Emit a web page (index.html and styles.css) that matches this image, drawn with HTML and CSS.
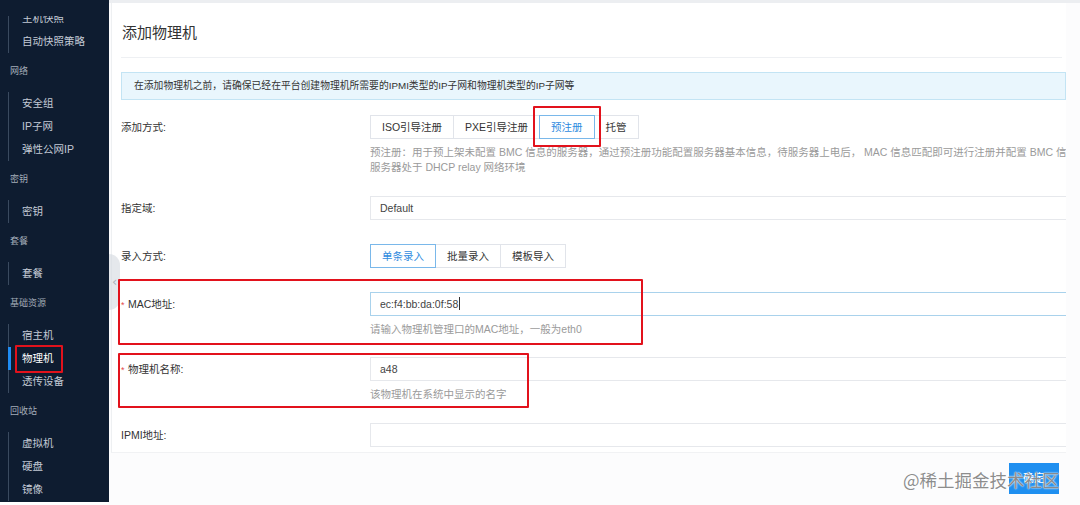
FILE: index.html
```html
<!DOCTYPE html>
<html>
<head>
<meta charset="utf-8">
<title>添加物理机</title>
<link rel="stylesheet" href="styles.css">
</head>
<body>
<div class="app">
  <aside class="sidebar">
    <div class="nav-scroll">
      <div class="nav">
        <ul class="nav-list">
          <li class="nav-item">主机快照</li>
          <li class="nav-item">自动快照策略</li>
        </ul>
        <div class="nav-group">网络</div>
        <ul class="nav-list">
          <li class="nav-item">安全组</li>
          <li class="nav-item">IP子网</li>
          <li class="nav-item">弹性公网IP</li>
        </ul>
        <div class="nav-group">密钥</div>
        <ul class="nav-list">
          <li class="nav-item">密钥</li>
        </ul>
        <div class="nav-group">套餐</div>
        <ul class="nav-list">
          <li class="nav-item">套餐</li>
        </ul>
        <div class="nav-group">基础资源</div>
        <ul class="nav-list">
          <li class="nav-item">宿主机</li>
          <li class="nav-item active">物理机</li>
          <li class="nav-item">透传设备</li>
        </ul>
        <div class="nav-group">回收站</div>
        <ul class="nav-list">
          <li class="nav-item">虚拟机</li>
          <li class="nav-item">硬盘</li>
          <li class="nav-item">镜像</li>
        </ul>
      </div>
    </div>
  </aside>

  <main class="main">
    <section class="card">
      <div class="card-head"><h1 class="title">添加物理机</h1></div>
      <div class="alert">在添加物理机之前，请确保已经在平台创建物理机所需要的IPMI类型的IP子网和物理机类型的IP子网等</div>

      <div class="form">
        <div class="form-item item-mode">
          <div class="label">添加方式:</div>
          <div class="control">
            <div class="btn-group">
              <span class="seg">ISO引导注册</span>
              <span class="seg">PXE引导注册</span>
              <span class="seg on">预注册</span>
              <span class="seg">托管</span>
            </div>
            <div class="desc">预注册：用于预上架未配置 BMC 信息的服务器，通过预注册功能配置服务器基本信息，待服务器上电后， MAC 信息匹配即可进行注册并配置 BMC 信息<br>服务器处于 DHCP relay 网络环境</div>
          </div>
        </div>

        <div class="form-item item-plain">
          <div class="label">指定域:</div>
          <div class="control">
            <div class="input">Default</div>
          </div>
        </div>

        <div class="form-item item-plain">
          <div class="label">录入方式:</div>
          <div class="control">
            <div class="btn-group">
              <span class="seg wide on">单条录入</span>
              <span class="seg wide">批量录入</span>
              <span class="seg wide">模板导入</span>
            </div>
          </div>
        </div>

        <div class="form-item item-mac">
          <div class="label"><span class="req">*</span>MAC地址:</div>
          <div class="control">
            <div class="input focus">ec:f4:bb:da:0f:58<span class="caret"></span></div>
            <div class="hint">请输入物理机管理口的MAC地址，一般为eth0</div>
          </div>
        </div>

        <div class="form-item item-name">
          <div class="label"><span class="req">*</span>物理机名称:</div>
          <div class="control">
            <div class="input">a48</div>
            <div class="hint">该物理机在系统中显示的名字</div>
          </div>
        </div>

        <div class="form-item item-last">
          <div class="label">IPMI地址:</div>
          <div class="control">
            <div class="input"></div>
          </div>
        </div>
      </div>
    </section>

    <footer class="footer">
      <span class="btn-primary">确定</span>
    </footer>
  </main>

  <div class="collapse">&lsaquo;</div>
  <div class="mark mark-nav"></div>
  <div class="mark mark-pre"></div>
  <div class="mark mark-mac"></div>
  <div class="mark mark-name"></div>
  <div class="watermark">@稀土掘金技术社区</div>
</div>
</body>
</html>
```

FILE: styles.css
```css
* { box-sizing: border-box; }
html, body { margin: 0; padding: 0; }
body {
  width: 1080px;
  height: 505px;
  overflow: hidden;
  background: #fff;
  font-family: "Liberation Sans", "Noto Sans CJK SC", sans-serif;
  color: #333;
}
ul { list-style: none; margin: 0; padding: 0; }

.app {
  position: relative;
  display: flex;
  width: 1080px;
  height: 505px;
  overflow: hidden;
}

/* ---------- sidebar ---------- */
.sidebar {
  width: 109px;
  flex: 0 0 109px;
  height: 502px;
  background: #0e1c30;
  overflow: hidden;
}
.nav-scroll {
  margin-top: 16px;
  height: 486px;
  overflow: hidden;
}
.nav { margin-top: -9.5px; }
.nav-list {
  margin-left: 8px;
  border-left: 1px solid #3a4a5f;
}
.nav-item {
  height: 23px;
  line-height: 23px;
  padding-left: 13px;
  font-size: 10.5px;
  color: #c3cad5;
  white-space: nowrap;
}
.nav-item.active {
  margin-left: -1px;
  border-left: 3px solid #1e8cf5;
  padding-left: 11px;
  color: #fff;
}
.nav-group {
  padding: 8px 0 10px 10px;
  height: 39px;
  line-height: 21px;
  font-size: 9px;
  color: #a3acb8;
}

/* ---------- main ---------- */
.main {
  flex: 1;
  display: flex;
  flex-direction: column;
  background: #fcfcfd;
  border-top: 3px solid #eceef1;
}
.card {
  margin-left: 2px;
  width: 955px;
  height: 450px;
  background: #fff;
  padding-left: 9px;
  overflow: hidden;
  border-left: 1px solid #eef0f2;
  border-bottom: 1px solid #f1f2f4;
}
.card-head {
  height: 55px;
  padding-top: 20px;
  border-bottom: 1px solid #eef0f3;
  margin-right: 4px;
}
.title {
  margin: 0;
  padding-left: 1px;
  font-size: 15px;
  line-height: 20px;
  font-weight: normal;
  color: #333;
}
.alert {
  margin-top: 14px;
  height: 28px;
  line-height: 26px;
  background: #e9f6fd;
  border: 1px solid #c3e4f4;
  padding-left: 12px;
  font-size: 9.8px;
  color: #333;
  white-space: nowrap;
}

.form { margin-top: 15px; }
.form-item {
  display: flex;
  align-items: flex-start;
}
.label {
  width: 249px;
  flex: 0 0 249px;
  height: 24px;
  line-height: 24px;
  font-size: 10.5px;
  color: #333;
  white-space: nowrap;
}
.req {
  color: #e5484d;
  margin-right: 3px;
  font-size: 9px;
  display: inline-block;
  width: 4px;
}
.control { flex: 0 0 760px; width: 760px; }

.item-mode { margin-bottom: 21px; }
.item-plain { margin-bottom: 24px; }
.item-mac { margin-bottom: 20px; }
.item-name { margin-bottom: 21px; }
.item-last { margin-bottom: 0; }

.btn-group { display: flex; }
.seg {
  height: 24px;
  line-height: 22px;
  padding: 0 11px;
  border: 1px solid #e1e4ea;
  margin-left: -1px;
  font-size: 10.5px;
  color: #333;
  background: #fff;
  white-space: nowrap;
}
.seg:first-child { margin-left: 0; }
.seg.wide { padding: 0 11px; }
.seg.on {
  position: relative;
  border-color: #7ab8ea;
  color: #2f8be0;
}
.desc {
  margin-top: 6px;
  line-height: 15px;
  font-size: 10.5px;
  color: #9a9a9a;
  white-space: nowrap;
}
.input {
  height: 24px;
  line-height: 22px;
  width: 760px;
  border: 1px solid #e6e8ec;
  padding-left: 9px;
  font-size: 10.5px;
  color: #444;
  background: #fff;
}
.input.focus { border-color: #a9d2ec; }
.caret {
  display: inline-block;
  width: 1px;
  height: 13px;
  background: #333;
  vertical-align: -2px;
  margin-left: 1px;
}
.hint {
  margin-top: 6px;
  line-height: 15px;
  font-size: 10.5px;
  color: #9a9a9a;
}

.footer {
  flex: 1;
  display: flex;
  justify-content: flex-end;
  align-items: flex-start;
  padding-top: 10px;
  padding-right: 21px;
}
.btn-primary {
  width: 50px;
  height: 31px;
  line-height: 31px;
  text-align: center;
  background: #1f8ff0;
  color: #fff;
  font-size: 11px;
}

/* ---------- overlays ---------- */
.collapse {
  position: absolute;
  left: 109px;
  top: 254px;
  width: 11px;
  height: 56px;
  border-radius: 0 28px 28px 0;
  background: rgba(212, 217, 224, 0.6);
  color: #aab0b9;
  font-size: 13px;
  line-height: 56px;
  text-align: center;
  font-family: "DejaVu Sans", sans-serif;
}
.mark {
  position: absolute;
  border: 2.5px solid #e2121c;
  border-radius: 1px;
}
.mark-nav { left: 15px; top: 345px; width: 48px; height: 28px; }
.mark-pre { left: 533px; top: 106px; width: 68px; height: 41px; }
.mark-mac { left: 118px; top: 279px; width: 525px; height: 66px; }
.mark-name { left: 118px; top: 353px; width: 411px; height: 55px; }

.watermark {
  position: absolute;
  left: 903px;
  top: 468px;
  font-size: 17.5px;
  line-height: 24px;
  color: rgba(110, 110, 110, 0.8);
  text-shadow: 0 0 2px #fff, 0 0 1px #fff;
  white-space: nowrap;
  font-family: "Noto Sans CJK SC", sans-serif;
}
```
